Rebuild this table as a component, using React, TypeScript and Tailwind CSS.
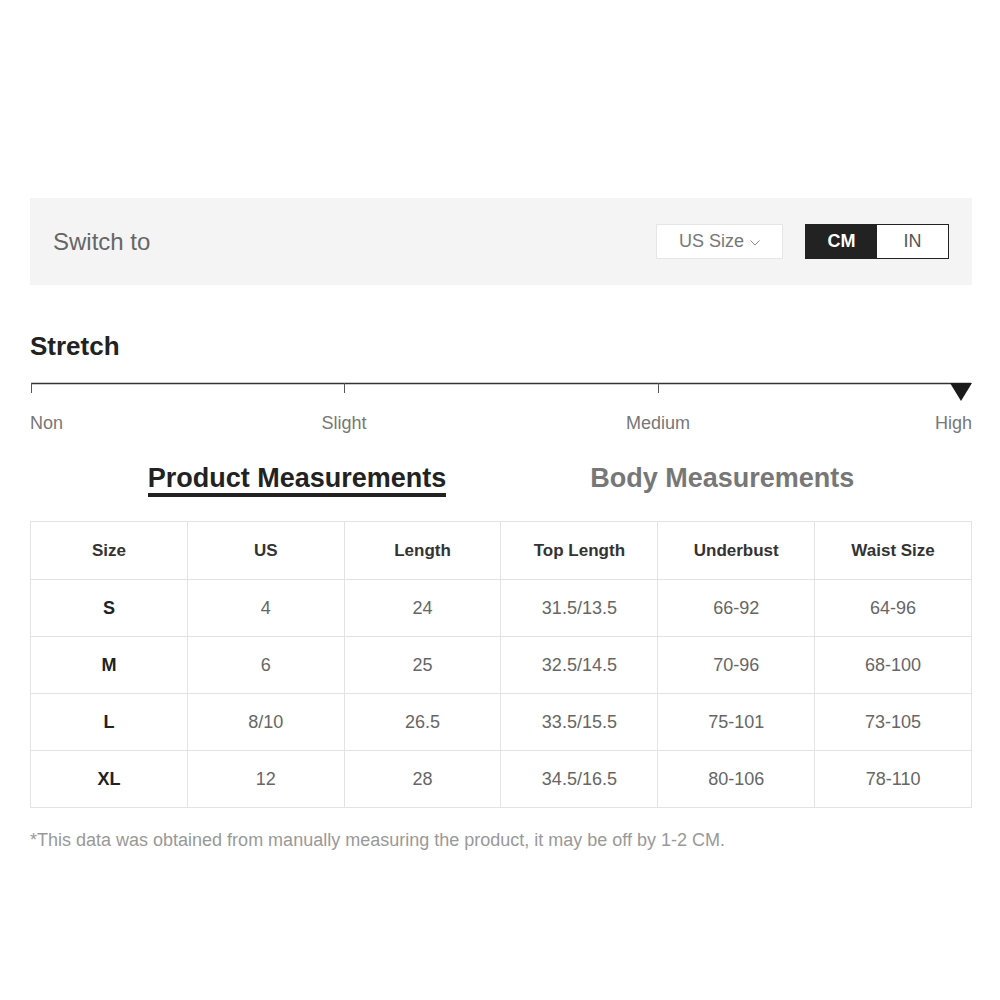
import React from 'react';

const headers = ['Size', 'US', 'Length', 'Top Length', 'Underbust', 'Waist Size'];

const rows = [
  ['S', '4', '24', '31.5/13.5', '66-92', '64-96'],
  ['M', '6', '25', '32.5/14.5', '70-96', '68-100'],
  ['L', '8/10', '26.5', '33.5/15.5', '75-101', '73-105'],
  ['XL', '12', '28', '34.5/16.5', '80-106', '78-110'],
];

const StretchScale = () => (
  <svg width="942" height="20" viewBox="0 0 942 20" className="block">
    <line x1="1" y1="1.5" x2="941" y2="1.5" stroke="#333" strokeWidth="1.5" />
    <line x1="1.5" y1="1" x2="1.5" y2="11" stroke="#555" strokeWidth="1" />
    <line x1="314.5" y1="1" x2="314.5" y2="11" stroke="#555" strokeWidth="1" />
    <line x1="628.5" y1="1" x2="628.5" y2="11" stroke="#555" strokeWidth="1" />
    <polygon points="920,1 942,1 931,19" fill="#1a1a1a" />
  </svg>
);

export default function App() {
  return (
    <div
      className="min-h-[1000px] bg-white pt-[198px]"
      style={{ fontFamily: '"Liberation Sans", Arial, sans-serif' }}
    >
      <div className="ml-[30px] w-[942px]">
        {/* Switch bar */}
        <div className="flex h-[87px] items-center justify-between bg-[#f4f4f4] pl-[23px] pr-[23px]">
          <span className="text-[24px] text-[#666]">Switch to</span>
          <div className="flex items-center gap-[22px]">
            <div className="flex h-[35px] w-[127px] items-center justify-center gap-[6px] border border-[#e6e6e6] bg-white text-[18px] text-[#777]">
              <span>US Size</span>
              <svg width="10" height="6" viewBox="0 0 10 6" className="mt-[2px]">
                <polyline points="0.5,0.5 5,5 9.5,0.5" fill="none" stroke="#888" strokeWidth="1" />
              </svg>
            </div>
            <div className="flex h-[35px] w-[144px] border border-[#222]">
              <div className="flex flex-1 items-center justify-center bg-[#222] text-[18px] font-bold text-white">CM</div>
              <div className="flex flex-1 items-center justify-center bg-white text-[18px] text-[#555]">IN</div>
            </div>
          </div>
        </div>

        {/* Stretch */}
        <h2 className="mt-[46px] text-[26px] font-bold leading-[30px] text-[#222]">Stretch</h2>
        <div className="mt-[21px]">
          <StretchScale />
        </div>
        <div className="mt-[10px] grid grid-cols-6 text-[18px] leading-[22px] text-[#777]">
          <span className="text-left">Non</span>
          <span className="col-span-2 text-center">Slight</span>
          <span className="col-span-2 text-center">Medium</span>
          <span className="text-right">High</span>
        </div>

        {/* Tabs */}
        <div className="mt-[29px] flex justify-center gap-[144px]">
          <div className="flex flex-col">
            <span className="text-[27px] font-bold leading-[30px] text-[#222]">Product Measurements</span>
            <div className="h-[4px] bg-[#222]" />
          </div>
          <span className="text-[27px] font-bold leading-[30px] text-[#777]">Body Measurements</span>
        </div>

        {/* Table */}
        <table className="mt-[24px] w-full table-fixed border-collapse">
          <thead>
            <tr className="h-[58px]">
              {headers.map((h) => (
                <th key={h} className="border border-[#e3e3e3] text-center text-[17px] font-bold text-[#333]">
                  {h}
                </th>
              ))}
            </tr>
          </thead>
          <tbody>
            {rows.map((row) => (
              <tr key={row[0]} className="h-[57px]">
                {row.map((cell, i) => (
                  <td
                    key={i}
                    className={`border border-[#e3e3e3] text-center text-[18px] ${
                      i === 0 ? 'font-bold text-[#222] text-[17px]' : 'text-[#666]'
                    }`}
                  >
                    {cell}
                  </td>
                ))}
              </tr>
            ))}
          </tbody>
        </table>

        <p className="mt-[19px] text-[18px] text-[#999]">
          *This data was obtained from manually measuring the product, it may be off by 1-2 CM.
        </p>
      </div>
    </div>
  );
}
